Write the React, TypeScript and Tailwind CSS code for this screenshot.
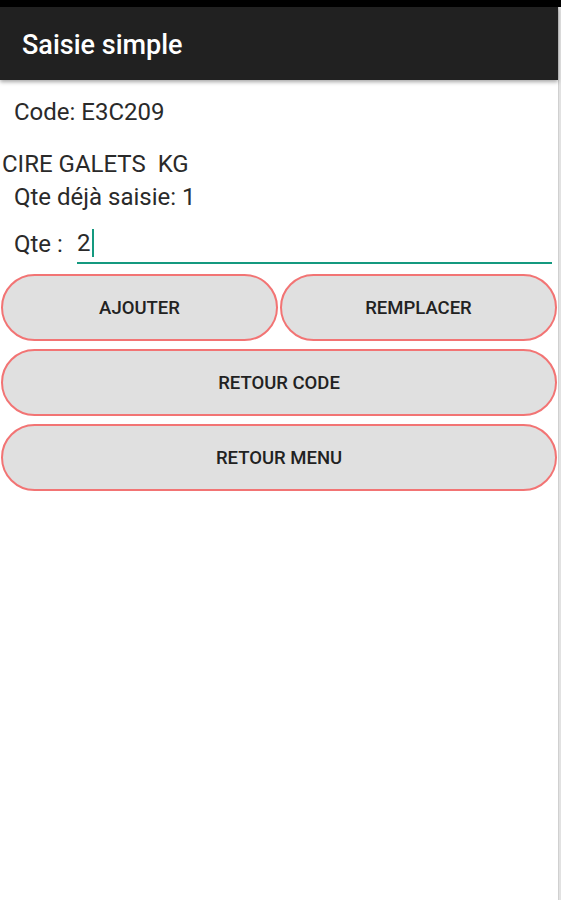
import React from 'react';

const PillButton: React.FC<{ label: string; className?: string }> = ({ label, className = '' }) => {
  return (
    <button
      className={`h-[67px] pt-[3px] rounded-full border-2 border-[#f27474] bg-[#e0e0e0] text-[18.5px] font-medium text-[#222] ${className}`}
    >
      {label}
    </button>
  );
};

const App: React.FC = () => {
  return (
    <div className="w-[561px] h-[900px] bg-white flex flex-col overflow-hidden font-['Roboto',sans-serif]">
      <div className="h-[7px] bg-black" />
      <div className="flex flex-1">
        <div className="flex-1 flex flex-col">
          <header className="h-[73px] bg-[#212121] flex items-center pt-[3px] pl-[22px] text-white text-[27px] font-medium shadow-[0_2px_4px_rgba(0,0,0,0.35)] z-10">
            Saisie simple
          </header>

          <div className="flex flex-col text-[24px] leading-[28px] text-[#2a2a2a]">
            <p className="pl-[14px] mt-[18px]">Code: E3C209</p>
            <p className="pl-[2px] mt-[24px] whitespace-pre">CIRE GALETS  KG</p>
            <p className="pl-[14px] mt-[5px]">Qte déjà saisie: 1</p>

            <div className="flex items-stretch h-[40px] mt-[13px] pl-[14px] pr-[6px]">
              <span className="w-[63px] flex items-center">Qte :</span>
              <div className="flex-1 flex items-center border-b-2 border-[#14997f]">
                <span>2</span>
                <span className="w-[2px] h-[28px] bg-[#14997f] ml-[1px]" />
              </div>
            </div>
          </div>

          <div className="flex flex-col gap-[8px] mt-[10px] px-[1px]">
            <div className="flex gap-[2px]">
              <PillButton label="AJOUTER" className="flex-1" />
              <PillButton label="REMPLACER" className="flex-1" />
            </div>
            <PillButton label="RETOUR CODE" className="w-full" />
            <PillButton label="RETOUR MENU" className="w-full" />
          </div>
        </div>
        <div className="w-[3px] bg-[#e2e2e2] border-l border-[#d0d0d0]" />
      </div>
    </div>
  );
};

export default App;
